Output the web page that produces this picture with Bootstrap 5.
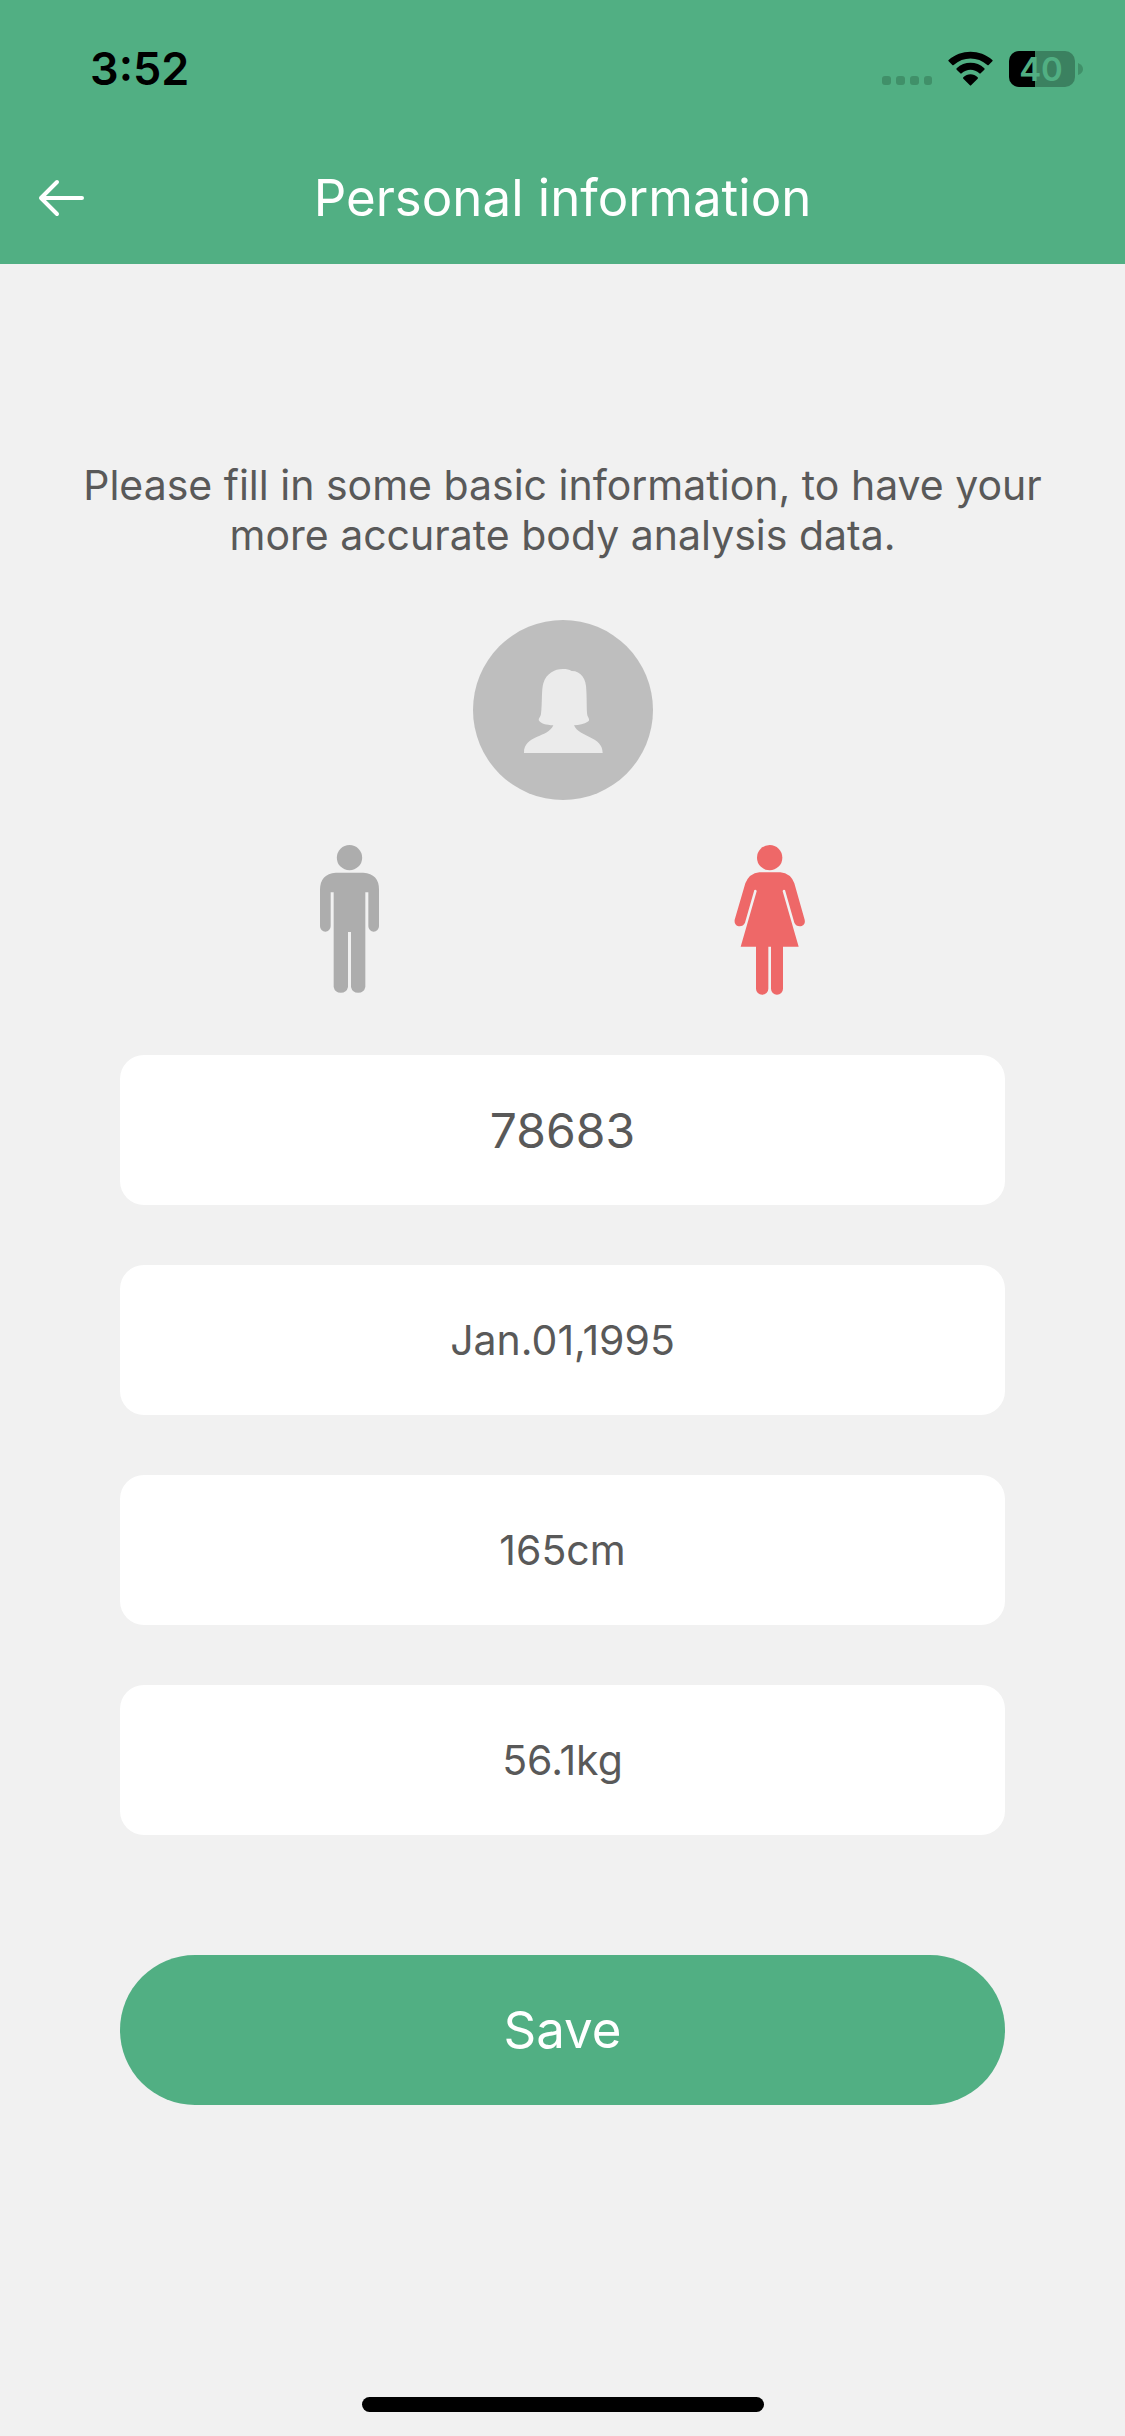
<!DOCTYPE html>
<html lang="en">
<head>
<meta charset="utf-8">
<meta name="viewport" content="width=device-width, initial-scale=1">
<title>Personal information</title>
<link href="https://cdn.jsdelivr.net/npm/bootstrap@5.3.0/dist/css/bootstrap.min.css" rel="stylesheet">
<style>
  :root { --brand: #51af83; --ink: #595959; }
  body { background: #f1f1f1; color: var(--ink); font-family: Inter, "Liberation Sans", sans-serif; }
  svg { display: block; flex: none; }
  .app-header { background: var(--brand); }
  .status-bar { height: 132px; padding: 6px 42px 0 90px; }
  .clock { font-size: 45px; font-weight: 600; line-height: 54px; color: #000; }
  .title-bar { height: 132px; padding: 0 36px; }
  .side-slot { width: 54px; }
  .page-title { font-size: 51px; line-height: 60px; font-weight: 400; }
  .content { padding: 196px 72px 0; }
  .intro { font-size: 41px; line-height: 50px; margin-bottom: 60px; }
  .figures { gap: 320px; padding: 45px 0 60px; }
  .figures label { cursor: pointer; color: #adadad; }
  .figures .btn-check:checked + label { color: #ee6868; }
  .form-area { padding: 0 48px; }
  .field-stack { gap: 60px; }
  .field-box, .field-box:focus { height: 150px; border: 0; border-radius: 24px; background: #fff; color: var(--ink); font-size: 41px; text-align: center; }
  .field-box.field-name { font-size: 48px; }
  .btn-save { --bs-btn-color: #fff; --bs-btn-bg: var(--brand); --bs-btn-hover-color: #fff; --bs-btn-hover-bg: #469c74; --bs-btn-active-bg: #469c74; height: 150px; margin-top: 120px; border: 0; font-size: 51px; }
  .home-bar { width: 402px; height: 15px; margin-bottom: 24px; background: #000; }
</style>
</head>
<body class="d-flex flex-column min-vh-100">
<header class="app-header">
  <div class="status-bar d-flex align-items-center justify-content-between">
    <span class="clock">3:52</span>
    <div class="d-flex align-items-center">
      <svg class="me-3" width="51" height="38" viewBox="0 0 51 38" fill="#409069" aria-hidden="true">
        <rect x="1" y="26" width="9" height="9" rx="3"/><rect x="15" y="26" width="9" height="9" rx="3"/><rect x="29" y="26" width="9" height="9" rx="3"/><rect x="43" y="26" width="8" height="9" rx="3"/>
      </svg>
      <svg class="me-3" width="45" height="38" viewBox="0 0 135 114" aria-label="Wi-Fi">
        <path d="M2 34Q0 32 2 30C39-3 96-3 133 30Q135 32 133 34L122 45Q120 47 118 45C89 19 46 19 17 45Q15 47 13 45Z"/>
        <path d="M26 59Q24 57 26 55C49 33 86 33 109 55Q111 57 109 59L98 70Q96 72 94 70C79 56 56 56 41 70Q39 72 37 70Z"/>
        <path d="M46 86Q44 84 46 82C58 70 77 70 89 82Q91 84 89 86L70 105Q67.500 108 65 105Z"/>
      </svg>
      <svg width="74" height="38" viewBox="0 0 74 38" aria-label="Battery 40%">
        <rect x="0" y="1" width="66" height="36" rx="10" fill="#3b8160"/>
        <path d="M10 1H26V37H10A10 10 0 0 1 0 27V11A10 10 0 0 1 10 1Z"/>
        <path d="M69 13Q74 15 74 19T69 25Z" fill="#409069"/>
        <text x="32" y="31" text-anchor="middle" font-size="33" font-weight="600" fill="#51af83">40</text>
      </svg>
    </div>
  </div>
  <div class="title-bar d-flex align-items-center justify-content-between text-white">
    <a href="#" class="side-slot text-white" aria-label="Back">
      <svg width="54" height="40" viewBox="0 0 54 40" fill="none" stroke="currentColor" stroke-width="4" stroke-linecap="round" stroke-linejoin="round"><path d="M21 4L5 20L21 36M5 20H46"/></svg>
    </a>
    <h1 class="page-title m-0">Personal information</h1>
    <span class="side-slot"></span>
  </div>
</header>

<main class="content flex-grow-1">
  <p class="intro text-center">Please fill in some basic information, to have your more accurate body analysis data.</p>
  <svg class="mx-auto" width="180" height="180" viewBox="0 0 540 540" role="img" aria-label="Avatar">
    <circle cx="270" cy="270" r="270" fill="#bebebe"/>
    <path fill="#ebebeb" d="M153 399C153 345 225 354 241 316C220 315 202 311 197 300C197 294 203 290 204 282C208 250 205 210 211 190C220 160 245 147 269 147C283 147 288 149 296 153C325 153 340 177 340 211C342 248 340 285 345 290C348 297 351 301 344 305C334 312 318 315 303 316C320 354 389 348 389 399Z"/>
  </svg>
  <form>
    <div class="figures d-flex justify-content-center" role="radiogroup" aria-label="Gender">
      <div>
        <input class="btn-check" type="radio" name="gender" id="male" autocomplete="off">
        <label class="d-block" for="male" aria-label="Male">
          <svg width="100" height="150" viewBox="9 45 300 450" fill="currentColor">
            <circle cx="148.500" cy="83" r="38"/>
            <path d="M107 128H190Q237 132 237 178V289A16 16 0 0 1 205 289V187H196V471A22 22 0 0 1 153 471V306H144V471A22 22 0 0 1 101 471V187H92V289A16 16 0 0 1 60 289V178Q61 132 107 128Z"/>
          </svg>
        </label>
      </div>
      <div>
        <input class="btn-check" type="radio" name="gender" id="female" autocomplete="off" checked>
        <label class="d-block" for="female" aria-label="Female">
          <svg width="100" height="150" viewBox="38 45 300 450" fill="currentColor">
            <circle cx="178" cy="83" r="38"/>
            <path d="M147 127H210Q241 130 252 160L283 269Q286 283 274 288Q258 291 252 278L224 180Q217 177 217 184L265 350H218V476A18 18 0 0 1 182 476V350H174V476A18 18 0 0 1 137 476V350H91L139 184Q139 177 132 180L104 278Q98 291 82 288Q71 283 73 269L105 160Q117 130 147 127Z"/>
          </svg>
        </label>
      </div>
    </div>
    <div class="form-area">
      <div class="field-stack d-flex flex-column">
        <input class="form-control field-box field-name" type="text" value="78683" aria-label="Name">
        <input class="form-control field-box" type="text" value="Jan.01,1995" aria-label="Birthday">
        <input class="form-control field-box" type="text" value="165cm" aria-label="Height">
        <input class="form-control field-box" type="text" value="56.1kg" aria-label="Weight">
      </div>
      <button class="btn btn-save w-100 rounded-pill" type="button">Save</button>
    </div>
  </form>
</main>
<div class="home-bar rounded-pill mx-auto"></div>
<script src="https://cdn.jsdelivr.net/npm/bootstrap@5.3.0/dist/js/bootstrap.bundle.min.js"></script>
</body>
</html>
